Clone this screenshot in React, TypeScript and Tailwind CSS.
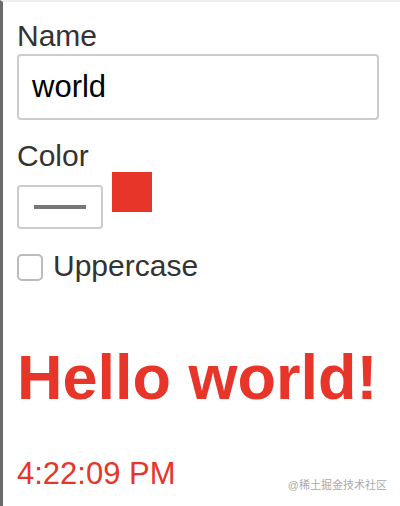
export default function App() {
  return (
    <div className="relative min-h-[506px] w-[400px] border-l-[3px] border-t-2 border-l-[#6b6b6b] border-t-[#eeeeee] bg-white pl-[14px] pt-[17px] font-['Liberation_Sans',Arial,sans-serif]">
      <label className="block text-[30px] leading-[34px] text-[#333]">Name</label>
      <div className="mt-px flex h-[66px] w-[362px] items-center rounded-[4px] border-2 border-[#cccccc] pl-[13px] text-[31px] text-black">
        world
      </div>

      <label className="mt-[19px] block text-[30px] leading-[34px] text-[#333]">Color</label>
      <div className="flex items-start gap-[9px]">
        <div className="mt-[12px] flex h-[44px] w-[86px] items-center justify-center rounded-[4px] border-2 border-[#cccccc]">
          <div className="h-[4px] w-[52px] bg-[#777777]" />
        </div>
        <div className="-mt-px h-[40px] w-[40px] bg-[#e8352a]" />
      </div>

      <div className="mt-[20px] flex items-center gap-[10px]">
        <div className="mt-[3px] h-[27px] w-[26px] rounded-[5px] border-2 border-[#bbbbbb]" />
        <span className="text-[30px] leading-[34px] text-[#333]">Uppercase</span>
      </div>

      <h1 className="mt-[63px] text-[63px] font-bold leading-[63px] text-[#e8352a]">Hello world!</h1>

      <p className="mt-[47px] text-[31px] leading-[36px] text-[#e8352a]">4:22:09 PM</p>

      <span className="absolute bottom-[13px] right-[13px] font-['Liberation_Sans','Noto_Sans_CJK_SC',sans-serif] text-[11px] text-[#aaaaaa]">
        @稀土掘金技术社区
      </span>
    </div>
  );
}
